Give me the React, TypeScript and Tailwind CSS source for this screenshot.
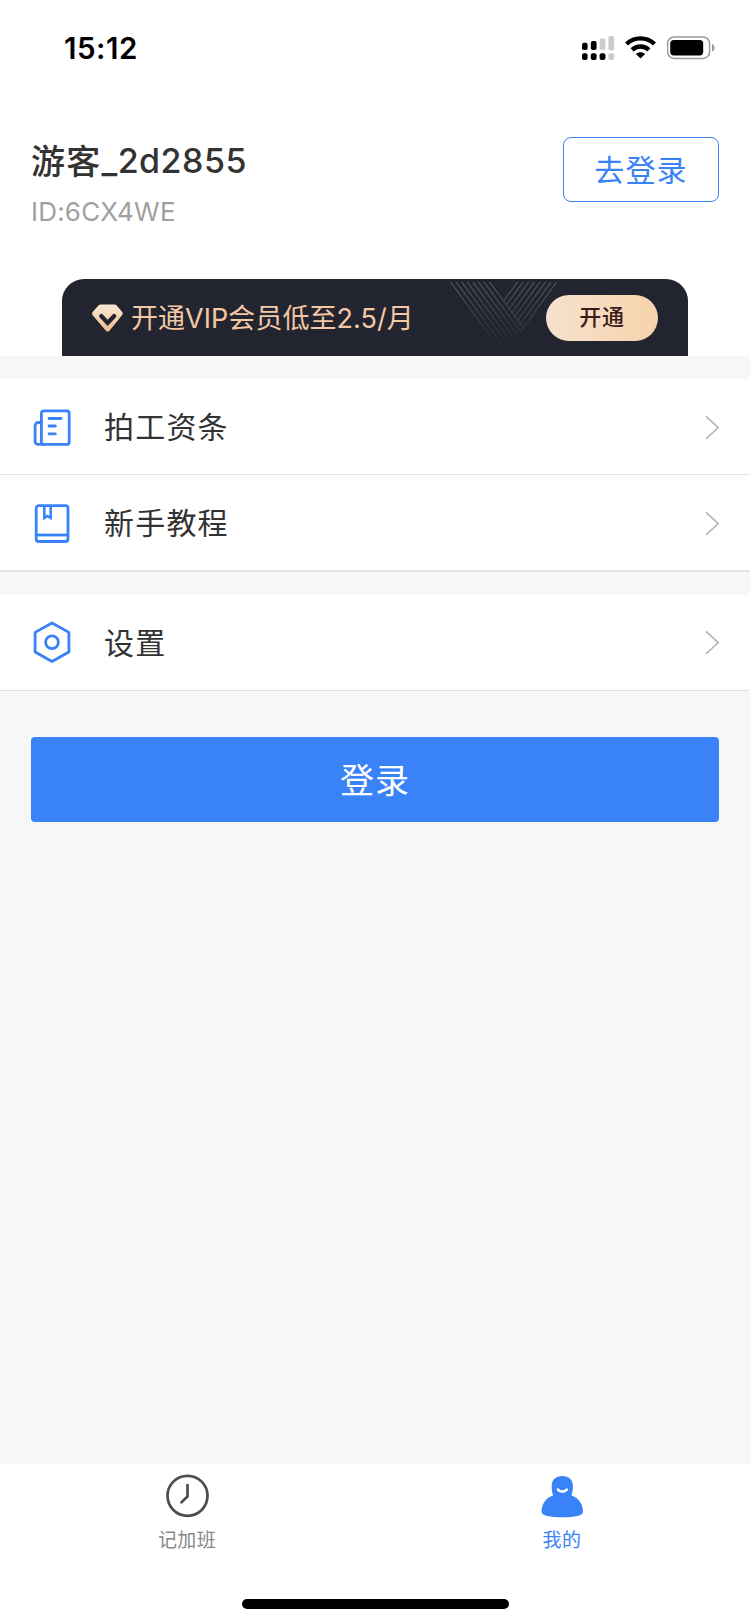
import type { ReactNode } from 'react';

function SignalIcon() {
  return (
    <svg className="w-[33px] h-6" viewBox="0 0 33 24" fill="#000">
      <rect x="0" y="6.7" width="5.600" height="7.3" rx="2" />
      <rect x="8.800" y="5" width="5.800" height="9" rx="2" />
      <rect x="17.600" y="2.6" width="5.800" height="11.4" rx="2" fill="#cccccc" />
      <rect x="26.400" y="0" width="5.800" height="14.4" rx="2" fill="#cccccc" />
      <rect x="0" y="17.3" width="5.600" height="6.6" rx="2" />
      <rect x="8.800" y="17.3" width="5.800" height="6.6" rx="2" />
      <rect x="17.600" y="17.3" width="5.800" height="6.6" rx="2" />
      <rect x="26.400" y="17.3" width="5.800" height="6.6" rx="2" fill="#cccccc" />
    </svg>
  );
}

function WifiIcon() {
  return (
    <svg className="w-8 h-6" viewBox="0 0 32 24" fill="none" stroke="#000" strokeWidth="4.400">
      <path d="M1.500 8a20.2 20.2 0 0 1 28 0" />
      <path d="M7.100 13.900a12.2 12.2 0 0 1 16.8 0" />
      <path d="M15.500 22.600l-4.600-4.500c2.400-2.600 6.800-2.600 9.200 0z" fill="#000" stroke="none" />
    </svg>
  );
}

function BatteryIcon() {
  return (
    <svg className="w-[49px] h-6" viewBox="0 0 49 24" fill="none">
      <rect x="0.6" y="1" width="42" height="21.4" rx="6.5" stroke="#9b9b9b" strokeWidth="1.5" />
      <rect x="3.2" y="4" width="33" height="15.400" rx="3.6" fill="#000" />
      <path d="M45 8c3.4 1 3.4 6.600 0 7.600z" fill="#9b9b9b" />
    </svg>
  );
}

function DiamondIcon() {
  return (
    <svg className="w-8 h-7" viewBox="0 0 32 28">
      <defs>
        <linearGradient id="diamond" x1="0" y1="0" x2="0" y2="1">
          <stop offset="0" stopColor="#fbe8d8" />
          <stop offset="1" stopColor="#efbd90" />
        </linearGradient>
      </defs>
      <path
        d="M9 .5h13.400a3 3 0 0 1 2.300 1l5.500 6.500a2.600 2.600 0 0 1-.2 3.200L17.700 26.600a2.700 2.700 0 0 1-4 0L.700 11.200A2.600 2.600 0 0 1 .6 8L6.400 1.500A3 3 0 0 1 9 .5z"
        fill="url(#diamond)"
      />
      <path d="M9.200 12l6.500 7 6.500-7" fill="none" stroke="#222430" strokeWidth="4.200" strokeLinecap="round" />
    </svg>
  );
}

// Two crossing groups of fading diagonals
function BannerLines() {
  const left = [0, 5.6, 11.2, 16.800, 22.400, 28, 33.600, 39.200];
  const right = [67, 72.600, 78.200, 83.800, 89.400, 95, 100.600, 106.200];
  return (
    <svg className="absolute left-[388px] top-[3px] w-[110px] h-[68px]" viewBox="0 0 110 68" fill="none">
      <defs>
        <linearGradient id="lines" gradientUnits="userSpaceOnUse" x1="0" y1="0" x2="0" y2="68">
          <stop offset="0" stopColor="#656772" />
          <stop offset="1" stopColor="#222430" />
        </linearGradient>
      </defs>
      <g stroke="url(#lines)" strokeWidth="1">
        {left.map((x, i) => (
          <path key={x} d={`M${x + 0.5} 0l${50 - i * 2.2} ${68 - i * 3}`} />
        ))}
        {right.map((x, i) => (
          <path key={x} d={`M${x + 0.5} 0l${-13.5 - i * 3.2} ${18.5 + i * 4.400}`} />
        ))}
      </g>
    </svg>
  );
}

function PayslipIcon() {
  return (
    <svg className="w-10 h-10" viewBox="0 0 40 40" fill="none" stroke="#3982f7" strokeWidth="2.800" strokeLinecap="round">
      <rect x="9.400" y="3.800" width="27.800" height="33.600" rx="2.500" />
      <path d="M9.400 15.500H6.100a3 3 0 0 0-3 3v15.900a3 3 0 0 0 3 3H12" />
      <path d="M17 11.500h12M17 19h6.400M17 26.800h6.400" />
    </svg>
  );
}

function BookIcon() {
  return (
    <svg className="w-10 h-10" viewBox="0 0 40 40" fill="none" stroke="#3982f7" strokeWidth="2.800">
      <rect x="4.200" y="2.700" width="31.800" height="35.800" rx="2.500" />
      <path d="M4.200 32h31.800" />
      <path d="M12.300 3v12l3.200-2 3.200 2V3" strokeWidth="2.500" />
    </svg>
  );
}

function SettingsIcon() {
  return (
    <svg className="w-10 h-[42px]" viewBox="0 0 40 42" fill="none" stroke="#3982f7" strokeWidth="2.800" strokeLinejoin="round">
      <path d="M20 2L36.900 11.400v19.700L20 40.400 3.100 31.100V11.400z" />
      <circle cx="20" cy="21.200" r="6.400" />
    </svg>
  );
}

function ClockIcon() {
  return (
    <svg className="w-[45px] h-11" viewBox="0 0 45 44" fill="none" stroke="#4d4d4d" strokeWidth="2.700" strokeLinecap="round" strokeLinejoin="round">
      <circle cx="22.500" cy="21.800" r="20" />
      <path d="M22.500 11v11.500l-6 5.700" />
    </svg>
  );
}

function UserIcon() {
  return (
    <svg className="w-[45px] h-11" viewBox="0 0 45 44">
      <path
        d="M22.300 1.900c6.500 0 10.600 3.800 10.600 10 0 4-.4 7-1.500 9.500C38.500 23.600 43 29.800 43 37.800c0 4-8 5.500-20.700 5.500S1.600 41.800 1.600 37.800c0-8 4.500-14.200 11.600-16.400-1.100-2.500-1.500-5.500-1.500-9.500 0-6.200 4.100-10 10.600-10z"
        fill="#3982f7"
      />
      <path d="M17.900 15.600c2.300 2.700 6.500 2.700 8.800 0" fill="none" stroke="#fff" strokeWidth="2.600" strokeLinecap="round" />
    </svg>
  );
}

function MenuRow({ icon, label, className }: { icon: ReactNode; label: string; className: string }) {
  return (
    <div className={`flex items-center bg-white border-[#e4e4e4] pl-8 pr-[31px] ${className}`}>
      {icon}
      <span className="ml-8 pt-px flex-1 text-[30px] leading-[44px] tracking-[1.200px] text-[#333]">{label}</span>
      <svg className="w-[15px] h-6" viewBox="0 0 15 24" fill="none" stroke="#b8b8b8" strokeWidth="1.700">
        <path d="M2 1.400L14.200 12.500 2 23.800" />
      </svg>
    </div>
  );
}

export default function App() {
  return (
    <div className="flex flex-col w-[750px] h-[1624px] overflow-hidden bg-[#f7f7f7] font-['Inter','Noto_Sans_CJK_SC',sans-serif]">
      {/* Status bar */}
      <div className="flex items-center justify-between h-24 pl-16 pr-[34px] bg-white">
        <span className="text-[29.500px] leading-9 tracking-[0.500px] font-semibold text-black">15:12</span>
        <div className="flex items-center gap-[10px]">
          <SignalIcon />
          <WifiIcon />
          <BatteryIcon />
        </div>
      </div>

      {/* Profile */}
      <div className="flex justify-between items-start h-[183px] pl-[31px] pr-[31px] pt-10 bg-white">
        <div>
          <div className="flex items-center h-[50px] text-[34px] font-medium text-[#333]">
            <span className="tracking-[1.200px]">游客</span>
            <span className="pb-[2px] tracking-[0.500px]">_2d2855</span>
          </div>
          <div className="mt-2 h-9 text-[26px] leading-9 tracking-[0.200px] text-[#a0a0a0]">ID:6CX4WE</div>
        </div>
        <button className="mt-px w-[156px] h-[65px] border border-[#3982f7] rounded-lg pt-[2px] text-[30px] tracking-[1.200px] text-[#3982f7]">
          去登录
        </button>
      </div>

      {/* VIP banner */}
      <div className="h-[77px] px-[62px] bg-white">
        <div className="relative flex items-center h-full pl-[30px] pr-[30px] rounded-t-[22px] bg-[#222430]">
          <BannerLines />
          <DiamondIcon />
          <span className="ml-[7px] pt-[3px] flex-1 text-[27px] leading-9 tracking-[0.050px] text-[#f3c8a5]">开通VIP会员低至2.5/月</span>
          <button className="relative w-28 h-[46px] rounded-full bg-linear-to-r from-[#f6e2cd] to-[#f7d2ac] text-[22px] tracking-[0.800px] font-medium text-[#3a1d1a]">
            开通
          </button>
        </div>
      </div>

      {/* Menu */}
      <div className="mt-[23px]">
        <MenuRow className="h-24 border-b" icon={<PayslipIcon />} label="拍工资条" />
        <MenuRow className="h-[97px] border-b-2" icon={<BookIcon />} label="新手教程" />
        <MenuRow className="mt-[23px] h-24 pb-px border-b" icon={<SettingsIcon />} label="设置" />
      </div>

      <button className="mx-[31px] mt-[46px] h-[85px] rounded bg-[#3982f7] pt-px text-[34px] tracking-[1px] text-white">登录</button>

      {/* Tab bar */}
      <div className="mt-auto h-40 bg-white">
        <div className="grid grid-cols-2 h-[135px] pt-[10px]">
          <div className="flex flex-col items-center">
            <ClockIcon />
            <span className="mt-[9px] pr-px text-[19px] leading-7 tracking-[0.400px] text-[#888]">记加班</span>
          </div>
          <div className="flex flex-col items-center">
            <UserIcon />
            <span className="mt-[9px] pr-px text-[19px] leading-7 tracking-[0.400px] text-[#3982f7]">我的</span>
          </div>
        </div>
        <div className="mx-auto w-[267px] h-[10px] rounded-full bg-black"></div>
      </div>
    </div>
  );
}
